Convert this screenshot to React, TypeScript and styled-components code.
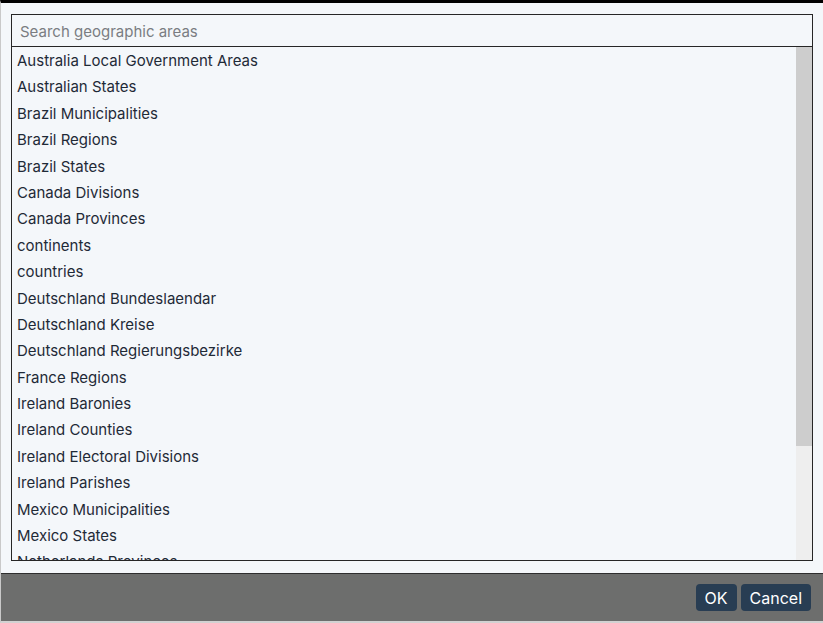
import React from "react";
import styled, { createGlobalStyle } from "styled-components";

const Global = createGlobalStyle`
  html, body { margin: 0; padding: 0; background: #ffffff; }
  body { font-family: "Inter", "Liberation Sans", sans-serif; }
  * { box-sizing: border-box; }
`;

const Dialog = styled.div`
  width: 823px;
  height: 623px;
  display: flex;
  flex-direction: column;
  background: #f4f7fa;
  border-top: 3px solid #000000;
  border-left: 1px solid #c9c9c9;
  border-bottom: 2px solid #d2d2d2;
`;

const Body = styled.div`
  flex: 1;
  display: flex;
  flex-direction: column;
  padding: 11px 10px 12px 10px;
  min-height: 0;
`;

const Search = styled.input`
  height: 33px;
  width: 100%;
  border: 1px solid #262626;
  background: #f4f7fa;
  padding: 1px 8px 0 8px;
  font: inherit;
  font-size: 15px;
  color: #1f2b3a;
  outline: none;
  &::placeholder { color: #7a7d82; }
`;

const ListBox = styled.div`
  flex: 1;
  min-height: 0;
  display: flex;
  border: 1px solid #262626;
  border-top: none;
`;

const Scroller = styled.ul`
  list-style: none;
  margin: 0;
  padding: 1px 0 0 0;
  flex: 1;
  min-width: 0;
  overflow-y: auto;
  scrollbar-width: none;
  &::-webkit-scrollbar { display: none; }
`;

const Track = styled.div`
  width: 16px;
  flex: none;
  background: #eeeeee;
  display: flex;
  flex-direction: column;
`;

const Thumb = styled.div`
  width: 100%;
  background: #cdcdcd;
`;

const Item = styled.li`
  height: 26.4px;
  line-height: 26.4px;
  padding: 0 5px;
  font-size: 15px;
  color: #1f2a37;
  white-space: nowrap;
  cursor: pointer;
`;

const Footer = styled.div`
  height: 48px;
  flex: none;
  background: #6d6e6d;
  border-top: 1px solid #2e2e2e;
  display: flex;
  justify-content: flex-end;
  align-items: flex-start;
  gap: 4px;
  padding: 10px 12px 0 0;
`;

const Button = styled.button`
  height: 27px;
  padding: 0 9px;
  background: #283d53;
  color: #ffffff;
  border: none;
  border-radius: 4px;
  font: inherit;
  font-size: 16px;
  cursor: pointer;
`;

const areas = [
  "Australia Local Government Areas",
  "Australian States",
  "Brazil Municipalities",
  "Brazil Regions",
  "Brazil States",
  "Canada Divisions",
  "Canada Provinces",
  "continents",
  "countries",
  "Deutschland Bundeslaendar",
  "Deutschland Kreise",
  "Deutschland Regierungsbezirke",
  "France Regions",
  "Ireland Baronies",
  "Ireland Counties",
  "Ireland Electoral Divisions",
  "Ireland Parishes",
  "Mexico Municipalities",
  "Mexico States",
  "Netherlands Provinces",
  "New Zealand Regions",
  "UK Counties",
  "US Counties",
  "US States",
  "World Regions",
];

const VISIBLE = 513;
const ROW = 26.4;

export default function App() {
  const content = areas.length * ROW;
  const thumb = Math.min(VISIBLE, (VISIBLE / content) * VISIBLE);
  return (
    <>
      <Global />
      <Dialog>
        <Body>
          <Search placeholder="Search geographic areas" />
          <ListBox>
            <Scroller>
              {areas.map((a) => (
                <Item key={a}>{a}</Item>
              ))}
            </Scroller>
            <Track>
              <Thumb style={{ height: thumb }} />
            </Track>
          </ListBox>
        </Body>
        <Footer>
          <Button>OK</Button>
          <Button>Cancel</Button>
        </Footer>
      </Dialog>
    </>
  );
}
